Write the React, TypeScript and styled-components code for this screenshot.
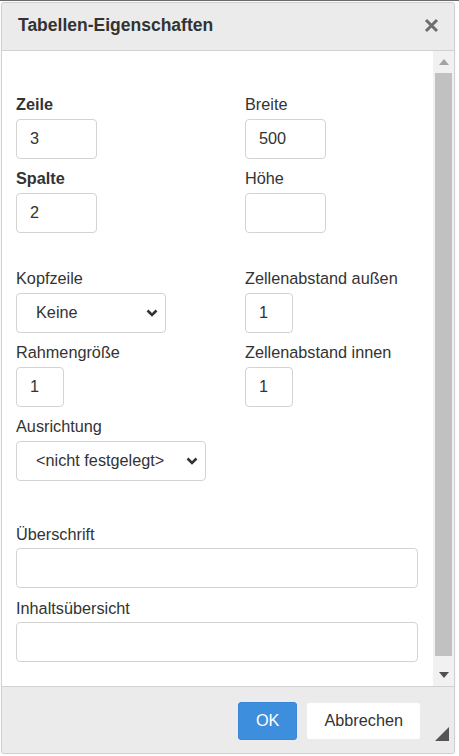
import React from "react";
import styled, { createGlobalStyle } from "styled-components";

const GlobalStyle = createGlobalStyle`
  html, body { margin: 0; padding: 0; background: #fff; }
  body { font-family: "Liberation Sans", Arial, Helvetica, sans-serif; color: #333; }
  *, *::before, *::after { box-sizing: border-box; }
`;

const Page = styled.div`
  width: 459px;
  height: 756px;
  border-top: 1px solid #6b6b6b;
  padding: 1px 0 0 1px;
  background: #fff;
  overflow: hidden;
`;

const Dialog = styled.div`
  width: 454px;
  height: 752px;
  border: 1px solid #d1d1d1;
  border-radius: 3px;
  background: #ebebeb;
  display: flex;
  flex-direction: column;
  overflow: hidden;
  box-shadow: 0 0 2px rgba(0, 0, 0, 0.08);
`;

const TitleBar = styled.div`
  height: 48px;
  flex: none;
  border-bottom: 1px solid #d1d1d1;
  background: #ebebeb;
  display: flex;
  align-items: center;
  justify-content: space-between;
  padding: 0 15px 3px 16px;
`;

const Title = styled.h1`
  margin: 0;
  font-size: 17.5px;
  font-weight: bold;
  color: #333;
  line-height: 20px;
`;

const CloseButton = styled.button`
  border: 0;
  background: none;
  padding: 0;
  width: 15px;
  height: 15px;
  display: flex;
  align-items: center;
  justify-content: center;
  cursor: pointer;
`;

const Body = styled.div`
  height: 635px;
  flex: none;
  display: flex;
  background: #fff;
`;

const Content = styled.div`
  flex: 1;
  padding: 44.3px 15px 0 14px;
  display: flex;
  flex-direction: column;
`;

const Section = styled.div<{ $gap?: number }>`
  display: flex;
  flex-direction: column;
  gap: 10.5px;
  margin-top: ${(p) => p.$gap ?? 0}px;
`;

const Grid = styled.div`
  display: grid;
  grid-template-columns: 229px 1fr;
  row-gap: 10.5px;
`;

const Field = styled.div`
  display: flex;
  flex-direction: column;
  gap: 4.5px;
`;

const Label = styled.label<{ $required?: boolean }>`
  font-size: 16.25px;
  line-height: 19px;
  color: #333;
  font-weight: ${(p) => (p.$required ? "bold" : "normal")};
`;

const TextInput = styled.input<{ $w?: string }>`
  width: ${(p) => p.$w ?? "100%"};
  height: 40px;
  border: 1px solid #d3d3d3;
  border-radius: 4px;
  padding: 0 0 0 13px;
  font-family: inherit;
  font-size: 16.25px;
  color: #333;
  background: #fff;
  outline: none;
`;

const Select = styled.div<{ $w: string }>`
  width: ${(p) => p.$w};
  height: 40px;
  border: 1px solid #d3d3d3;
  border-radius: 4px;
  padding: 0 7px 0 19px;
  display: flex;
  align-items: center;
  justify-content: space-between;
  font-size: 16.25px;
  color: #333;
  background: #fff;
`;

const ScrollBar = styled.div`
  width: 21px;
  flex: none;
  background: #f1f1f1;
  display: flex;
  flex-direction: column;
`;

const ScrollButton = styled.div`
  height: 22px;
  flex: none;
  display: flex;
  align-items: center;
  justify-content: center;
`;

const Track = styled.div`
  flex: 1;
  padding: 0 2px 8px 2px;
  display: flex;
`;

const Thumb = styled.div`
  flex: 1;
  background: #c1c1c1;
`;

const Footer = styled.div`
  flex: 1;
  position: relative;
  border-top: 1px solid #d1d1d1;
  background: #ebebeb;
  display: flex;
  justify-content: flex-end;
  align-items: center;
  gap: 9px;
  padding: 1px 33px 0 0;
`;

const Button = styled.button<{ $primary?: boolean }>`
  height: 38px;
  padding: 0 17px;
  border-radius: 3px;
  font-family: inherit;
  font-size: 16.25px;
  border: 1px solid ${(p) => (p.$primary ? "#3a86d8" : "#ececec")};
  background: ${(p) => (p.$primary ? "#3e8ede" : "#fff")};
  color: ${(p) => (p.$primary ? "#fff" : "#333")};
  cursor: pointer;
`;

const ResizeGrip = styled.div`
  position: absolute;
  right: 5px;
  bottom: 12px;
  width: 14px;
  height: 14px;
  display: flex;
`;

const Chevron = () => (
  <svg width="12" height="8" viewBox="0 0 12 8">
    <polyline points="1.5,1.5 6,6 10.5,1.5" fill="none" stroke="#333" strokeWidth="2.6" />
  </svg>
);

export default function App() {
  return (
    <>
      <GlobalStyle />
      <Page>
        <Dialog>
          <TitleBar>
            <Title>Tabellen-Eigenschaften</Title>
            <CloseButton aria-label="Schließen">
              <svg width="15" height="15" viewBox="0 0 15 15">
                <path d="M2 2 L13 13 M13 2 L2 13" stroke="#6e6e6e" strokeWidth="3" />
              </svg>
            </CloseButton>
          </TitleBar>
          <Body>
            <Content>
              <Grid>
                <Field>
                  <Label $required>Zeile</Label>
                  <TextInput $w="81px" defaultValue="3" />
                </Field>
                <Field>
                  <Label>Breite</Label>
                  <TextInput $w="81px" defaultValue="500" />
                </Field>
                <Field>
                  <Label $required>Spalte</Label>
                  <TextInput $w="81px" defaultValue="2" />
                </Field>
                <Field>
                  <Label>Höhe</Label>
                  <TextInput $w="81px" defaultValue="" />
                </Field>
              </Grid>
              <Section $gap={36.4}>
                <Grid>
                  <Field>
                    <Label>Kopfzeile</Label>
                    <Select $w="150px">
                      <span>Keine</span>
                      <Chevron />
                    </Select>
                  </Field>
                  <Field>
                    <Label>Zellenabstand außen</Label>
                    <TextInput $w="48px" defaultValue="1" />
                  </Field>
                  <Field>
                    <Label>Rahmengröße</Label>
                    <TextInput $w="48px" defaultValue="1" />
                  </Field>
                  <Field>
                    <Label>Zellenabstand innen</Label>
                    <TextInput $w="48px" defaultValue="1" />
                  </Field>
                </Grid>
                <Field>
                  <Label>Ausrichtung</Label>
                  <Select $w="190px">
                    <span>&lt;nicht festgelegt&gt;</span>
                    <Chevron />
                  </Select>
                </Field>
              </Section>
              <Section $gap={44}>
                <Field>
                  <Label>Überschrift</Label>
                  <TextInput defaultValue="" />
                </Field>
                <Field>
                  <Label>Inhaltsübersicht</Label>
                  <TextInput defaultValue="" />
                </Field>
              </Section>
            </Content>
            <ScrollBar>
              <ScrollButton>
                <svg width="10" height="6" viewBox="0 0 10 6">
                  <polygon points="5,0 10,6 0,6" fill="#a3a3a3" />
                </svg>
              </ScrollButton>
              <Track>
                <Thumb />
              </Track>
              <ScrollButton>
                <svg width="10" height="6" viewBox="0 0 10 6">
                  <polygon points="0,0 10,0 5,6" fill="#505050" />
                </svg>
              </ScrollButton>
            </ScrollBar>
          </Body>
          <Footer>
            <Button $primary>OK</Button>
            <Button>Abbrechen</Button>
            <ResizeGrip>
              <svg width="14" height="14" viewBox="0 0 14 14">
                <polygon points="14,0 14,14 0,14" fill="#555" />
              </svg>
            </ResizeGrip>
          </Footer>
        </Dialog>
      </Page>
    </>
  );
}
